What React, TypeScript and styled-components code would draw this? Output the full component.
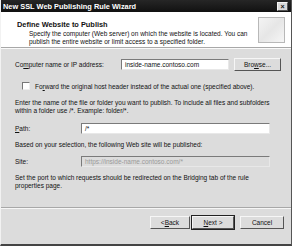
import styled, { createGlobalStyle } from "styled-components";

const GlobalStyle = createGlobalStyle`
  html, body {
    margin: 0;
    padding: 0;
    background: #ffffff;
  }
  body {
    font-family: "Liberation Sans", Tahoma, sans-serif;
    font-size: 6.5px;
    color: #111;
  }
`;

const Window = styled.div`
  width: 292px;
  height: 246px;
  box-sizing: border-box;
  display: flex;
  flex-direction: column;
  background: #dcdcdc;
  border-left: 1px solid #f2f2f2;
  border-right: 1px solid #555;
  border-bottom: 2px solid #444;
  overflow: hidden;
`;

const TitleBar = styled.div`
  height: 12px;
  flex: none;
  display: flex;
  align-items: center;
  justify-content: space-between;
  padding: 0 3px 0 2px;
  background: linear-gradient(#262626, #111);
  color: #fff;
  font-weight: bold;
  font-size: 7.4px;
`;

const CloseButton = styled.div`
  width: 11px;
  height: 9px;
  box-sizing: border-box;
  background: #d8d8d8;
  border: 1px solid #f4f4f4;
  border-right-color: #555;
  border-bottom-color: #555;
  display: flex;
  align-items: center;
  justify-content: center;
  color: #111;
  font-size: 7px;
  line-height: 1;
`;

const Header = styled.div`
  height: 35px;
  flex: none;
  background: #fff;
  display: flex;
  justify-content: space-between;
  padding: 0 6px 0 16px;
  border-bottom: 1px solid #a8a8a8;
`;

const HeaderText = styled.div`
  padding-top: 8px;
`;

const HeaderTitle = styled.div`
  font-weight: bold;
  font-size: 7.4px;
  line-height: 9px;
`;

const HeaderDesc = styled.div`
  padding-left: 12px;
  line-height: 7.5px;
  margin-top: 1px;
`;

const HeaderIcon = styled.div`
  width: 27px;
  height: 26px;
  margin-top: 5px;
  box-sizing: border-box;
  border: 1px solid #b8b8b8;
  background: linear-gradient(135deg, #f4f4f4, #e6e6e6 50%, #f6f6f6);
`;

const Body = styled.div`
  flex: 1;
  padding: 9px 10px 0 14px;
  display: flex;
  flex-direction: column;
  border-top: 1px solid #fafafa;
`;

const FieldRow = styled.div<{ $labelWidth: number; $top: number }>`
  display: grid;
  grid-template-columns: ${(p) => p.$labelWidth}px 1fr auto;
  align-items: center;
  column-gap: 5px;
  margin-top: ${(p) => p.$top}px;
  height: 13px;
`;

const Input = styled.div<{ $disabled?: boolean }>`
  height: 11px;
  box-sizing: border-box;
  border: 1px solid #7a7a7a;
  border-right-color: #e8e8e8;
  border-bottom-color: #e8e8e8;
  background: ${(p) => (p.$disabled ? "#dcdcdc" : "#fff")};
  color: ${(p) => (p.$disabled ? "#9a9a9a" : "#111")};
  padding-left: 3px;
  line-height: 9px;
  white-space: nowrap;
  overflow: hidden;
`;

const Button = styled.div<{ $width: number; $default?: boolean }>`
  width: ${(p) => p.$width}px;
  flex: none;
  height: 13px;
  box-sizing: border-box;
  background: #dcdcdc;
  border: 1px solid #f6f6f6;
  border-right-color: #555;
  border-bottom-color: #555;
  outline: ${(p) => (p.$default ? "1px solid #222" : "none")};
  display: flex;
  align-items: center;
  justify-content: center;
`;

const CheckRow = styled.div`
  display: flex;
  align-items: center;
  gap: 5px;
  margin: 11px 0 0 7px;
`;

const CheckBox = styled.div`
  width: 8px;
  height: 8px;
  box-sizing: border-box;
  background: #fff;
  border: 1px solid #777;
  border-right-color: #eee;
  border-bottom-color: #eee;
`;

const Para = styled.div<{ $top: number }>`
  margin-top: ${(p) => p.$top}px;
  line-height: 8px;
`;

const Footer = styled.div`
  height: 28px;
  flex: none;
  border-top: 1px solid #a8a8a8;
  box-shadow: inset 0 1px 0 #f6f6f6;
  display: flex;
  justify-content: flex-end;
  align-items: flex-start;
  padding: 8px 7px 0 0;
`;

const NavGroup = styled.div`
  display: flex;
  gap: 2px;
  margin-right: 6px;
`;

const Spacer = styled.div`
  width: 6px;
`;

const App: React.FC = () => {
  return (
    <>
      <GlobalStyle />
      <Window>
        <TitleBar>
          <span>New SSL Web Publishing Rule Wizard</span>
          <CloseButton>×</CloseButton>
        </TitleBar>
        <Header>
          <HeaderText>
            <HeaderTitle>Define Website to Publish</HeaderTitle>
            <HeaderDesc>
              Specify the computer (Web server) on which the website is located. You can
              <br />
              publish the entire website or limit access to a specified folder.
            </HeaderDesc>
          </HeaderText>
          <HeaderIcon />
        </Header>
        <Body>
          <FieldRow $labelWidth={101} $top={0}>
            <span>
              Co<u>m</u>puter name or IP address:
            </span>
            <Input>inside-name.contoso.com</Input>
            <Button $width={47}>
              Bro<u>w</u>se...
            </Button>
          </FieldRow>
          <CheckRow>
            <CheckBox />
            <span>
              Fo<u>r</u>ward the original host header instead of the actual one (specified above).
            </span>
          </CheckRow>
          <Para $top={9}>
            Enter the name of the file or folder you want to publish. To include all files and subfolders
            <br />
            within a folder use /*. Example: folder/*.
          </Para>
          <FieldRow $labelWidth={61} $top={7}>
            <span>
              <u>P</u>ath:
            </span>
            <Input>/*</Input>
            <Spacer />
          </FieldRow>
          <Para $top={6}>Based on your selection, the following Web site will be published:</Para>
          <FieldRow $labelWidth={61} $top={6}>
            <span>Site:</span>
            <Input $disabled>https://inside-name.contoso.com/*</Input>
            <Spacer />
          </FieldRow>
          <Para $top={6}>
            Set the port to which requests should be redirected on the Bridging tab of the rule
            <br />
            properties page.
          </Para>
        </Body>
        <Footer>
          <NavGroup>
            <Button $width={40}>
              &lt; <u>B</u>ack
            </Button>
            <Button $width={42} $default>
              <u>N</u>ext &gt;
            </Button>
          </NavGroup>
          <Button $width={44}>Cancel</Button>
        </Footer>
      </Window>
    </>
  );
};

export default App;
